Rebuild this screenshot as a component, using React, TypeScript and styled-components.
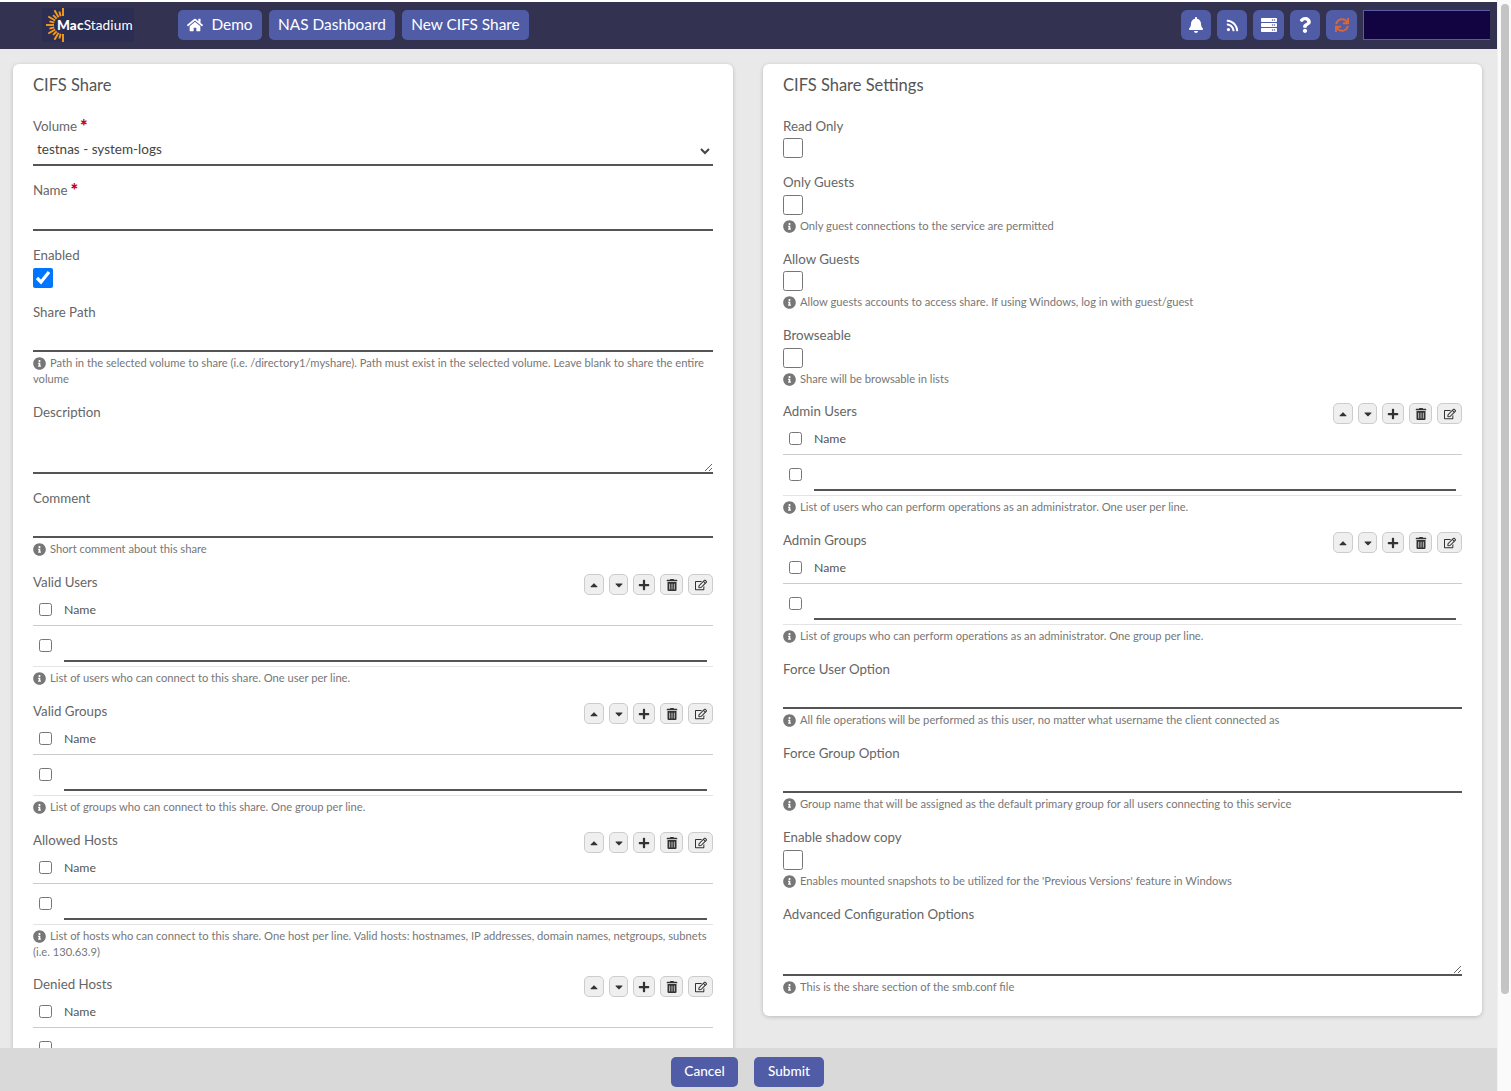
import React from 'react'
import styled, { createGlobalStyle } from 'styled-components'
import {
  FaHome,
  FaBell,
  FaRss,
  FaServer,
  FaQuestion,
  FaSync,
  FaInfoCircle,
  FaCaretUp,
  FaCaretDown,
  FaPlus,
  FaTrashAlt,
  FaRegEdit,
} from 'react-icons/fa'

const GlobalStyle = createGlobalStyle`
  html, body {
    margin: 0;
    height: 100%;
    overflow: hidden;
    font-family: Lato, "Open Sans", sans-serif;
    background: #fff;
  }
`

const Page = styled.div`
  width: 1511px;
  height: 1091px;
  display: flex;
  overflow: hidden;
`

const Main = styled.div`
  width: 1497px;
  height: 100%;
  display: flex;
  flex-direction: column;
  padding-top: 2px;
  box-sizing: border-box;
`

const ScrollTrack = styled.div`
  width: 14px;
  background: #fafafa;
  border-left: 1px solid #f0f0f0;
  box-sizing: border-box;
  padding: 4px 2px 0 3px;
`

const ScrollThumb = styled.div`
  height: 990px;
  background: #c4c4c4;
  border-radius: 4px;
`

const Navbar = styled.div`
  height: 47px;
  flex: none;
  background: #333251;
  display: flex;
  align-items: flex-start;
  padding: 8px 7px 0 42px;
  box-sizing: border-box;
`

const LogoBox = styled.div`
  width: 92px;
  height: 34px;
  margin-right: 44px;
  margin-top: -2px;
  display: flex;
  align-items: center;
  background: #2c2d52;
`

const LogoText = styled.span`
  font-size: 13.6px;
  color: #fff;
  margin-left: -11px;
  letter-spacing: 0.1px;
  padding-bottom: 1px;

  b {
    font-weight: 900;
  }
`

const NavButton = styled.div<{ $w: number }>`
  width: ${(p) => p.$w}px;
  height: 30px;
  box-sizing: border-box;
  padding-bottom: 2px;
  background: #515ca6;
  border-radius: 5px;
  color: #fff;
  font-size: 15.4px;
  display: flex;
  align-items: center;
  justify-content: center;
  gap: 8px;
  margin-right: 7px;
  flex: none;
  svg {
    font-size: 16px;
    margin-top: 2px;
  }
`

const NavSpacer = styled.div`
  flex: 1;
`

const IconButton = styled.div<{ $w?: number; $size?: number; $orange?: boolean }>`
  width: ${(p) => p.$w || 30}px;
  height: 30px;
  background: #515ca6;
  border-radius: 6px;
  color: ${(p) => (p.$orange ? '#d8663a' : '#fff')};
  display: flex;
  align-items: center;
  justify-content: center;
  margin-right: 6px;
  font-size: ${(p) => p.$size || 16}px;
  flex: none;
`

const DarkBox = styled.div`
  width: 127px;
  height: 30px;
  box-sizing: border-box;
  background: #120440;
  border-top: 1px solid #5a5aa8;
  border-bottom: 1px solid #5a5aa8;
  border-left: 1px solid #5a5aa8;
  flex: none;
`

const Content = styled.div`
  flex: 1;
  min-height: 0;
  overflow: hidden;
  background: #e9e9e9;
  display: flex;
  align-items: flex-start;
  padding: 15px 15px 0 13px;
  gap: 30px;
`

const Card = styled.div<{ $w: number }>`
  width: ${(p) => p.$w}px;
  flex: none;
  box-sizing: border-box;
  background: #fff;
  border-radius: 6px;
  padding: 11px 20px 6px;
  box-shadow: 0 1px 4px rgba(0, 0, 0, 0.2);
`

const CardTitle = styled.div`
  font-size: 16.5px;
  line-height: 20px;
  color: #555;
  margin-bottom: 21px;
`

const Field = styled.div<{ $mb?: number }>`
  margin-bottom: ${(p) => p.$mb ?? 14}px;
`

const Label = styled.div`
  font-size: 13.3px;
  line-height: 20px;
  color: #666;
  display: flex;
  gap: 3px;
`

const Required = styled.span`
  color: #c5000b;
  font-weight: 900;
  font-size: 18px;
  line-height: 16px;
  margin-top: 2px;
`

const SelectInput = styled.select`
  display: block;
  width: 100%;
  height: 30px;
  border: 0;
  border-bottom: 2px solid #555;
  background: #fff;
  font: 13.5px Lato, sans-serif;
  color: #444;
  outline: none;
  padding: 0 0 2px;
`

const TextInput = styled.input<{ $h?: number }>`
  display: block;
  width: 100%;
  height: ${(p) => p.$h || 30}px;
  box-sizing: border-box;
  border: 0;
  border-bottom: 2px solid #555;
  outline: none;
  background: #fff;
  padding: 0 4px;
`

const TextArea = styled.textarea`
  display: block;
  width: 100%;
  height: 52px;
  box-sizing: border-box;
  border: 0;
  border-bottom: 2px solid #555;
  outline: none;
  padding: 0 4px;
  resize: vertical;
`

const BigCheck = styled.input.attrs({ type: 'checkbox' })<{ $mt?: number }>`
  display: block;
  width: 20px;
  height: 20px;
  margin: ${(p) => p.$mt ?? 3}px 0 0;
`

const SmallCheck = styled.input.attrs({ type: 'checkbox' })`
  display: block;
  width: 13px;
  height: 13px;
  margin: 0;
  flex: none;
`

const Help = styled.div`
  font-size: 11.2px;
  line-height: 16px;
  color: #777;
  margin-top: 3px;
  padding-bottom: 1px;

  svg {
    color: #777;
    font-size: 13px;
    vertical-align: -2.5px;
    margin-right: 4px;
  }
`

const TableHead = styled.div`
  display: flex;
  justify-content: space-between;
  align-items: flex-start;
  height: 24px;
`

const TableTools = styled.div`
  display: flex;
  gap: 5px;
  margin-top: 2px;
`

const ToolButton = styled.div<{ $w: number }>`
  width: ${(p) => p.$w}px;
  height: 21px;
  box-sizing: border-box;
  background: #efefef;
  border: 1px solid #ccc;
  border-radius: 5px;
  color: #333;
  font-size: 12px;
  display: flex;
  align-items: center;
  justify-content: center;
`

const HeadRow = styled.div`
  height: 30px;
  display: flex;
  align-items: center;
  gap: 12px;
  padding: 0 0 2px 6px;
  border-bottom: 1px solid #ccc;
  box-sizing: border-box;
  font-size: 12.3px;
  color: #555;
`

const EditRow = styled.div`
  height: 41px;
  display: flex;
  align-items: center;
  gap: 12px;
  padding: 0 6px 2px;
  border-bottom: 1px solid #e4e4e4;
  box-sizing: border-box;
`

const RowInput = styled.input`
  flex: 1;
  min-width: 0;
  height: 36px;
  box-sizing: border-box;
  align-self: flex-start;
  border: 0;
  border-bottom: 2px solid #555;
  outline: none;
`

const Footer = styled.div`
  height: 43px;
  flex: none;
  background: #d9d9d9;
  display: flex;
  justify-content: center;
  gap: 16px;
  padding: 9px 2px 0 0;
  box-sizing: border-box;
`

const FooterButton = styled.div<{ $w: number }>`
  width: ${(p) => p.$w}px;
  height: 30px;
  box-sizing: border-box;
  padding-bottom: 2px;
  background: #515ca6;
  color: #fff;
  border-radius: 5px;
  font-size: 13.6px;
  font-weight: 500;
  display: flex;
  align-items: center;
  justify-content: center;
`

const Hint = ({ children }: { children: React.ReactNode }) => (
  <Help>
    <FaInfoCircle />
    {children}
  </Help>
)

const Logo = () => {
  const rays = [-90, -75, -60, -45, -30, -15, 0, 15, 30, 45, 60, 75, 90]
  return (
    <svg width="26" height="36" viewBox="0 0 26 36" style={{ flex: 'none' }}>
      {rays.map((a) => {
        const c = Math.cos((a * Math.PI) / 180)
        const s = Math.sin((a * Math.PI) / 180)
        const r = a % 30 === 0 ? 17 : 14
        return (
          <line
            key={a}
            x1={21 - c * 9}
            y1={18 + s * 9}
            x2={21 - c * r}
            y2={18 + s * r}
            stroke="#f59c1a"
            strokeWidth="1.9"
          />
        )
      })}
    </svg>
  )
}

const ListField = ({ label, mb, children }: { label: string; mb?: number; children?: React.ReactNode }) => (
  <Field $mb={mb}>
    <TableHead>
      <Label>{label}</Label>
      <TableTools>
        <ToolButton $w={20}><FaCaretUp /></ToolButton>
        <ToolButton $w={19}><FaCaretDown /></ToolButton>
        <ToolButton $w={22}><FaPlus /></ToolButton>
        <ToolButton $w={23}><FaTrashAlt /></ToolButton>
        <ToolButton $w={25}><FaRegEdit /></ToolButton>
      </TableTools>
    </TableHead>
    <HeadRow>
      <SmallCheck />
      Name
    </HeadRow>
    <EditRow>
      <SmallCheck />
      <RowInput />
    </EditRow>
    {children}
  </Field>
)

const App = () => {
  return (
    <Page>
      <GlobalStyle />
      <Main>
        <Navbar>
          <LogoBox>
            <Logo />
            <LogoText>
              <b>Mac</b>Stadium
            </LogoText>
          </LogoBox>
          <NavButton $w={84}><FaHome />Demo</NavButton>
          <NavButton $w={126}>NAS Dashboard</NavButton>
          <NavButton $w={127}>New CIFS Share</NavButton>
          <NavSpacer />
          <IconButton><FaBell /></IconButton>
          <IconButton $size={13}><FaRss /></IconButton>
          <IconButton $w={31}><FaServer /></IconButton>
          <IconButton><FaQuestion /></IconButton>
          <IconButton $w={31} $size={14} $orange><FaSync /></IconButton>
          <DarkBox />
        </Navbar>
        <Content>
          <Card $w={720}>
            <CardTitle>CIFS Share</CardTitle>
            <Field>
              <Label>Volume <Required>*</Required></Label>
              <SelectInput defaultValue="system-logs">
                <option value="system-logs">testnas - system-logs</option>
              </SelectInput>
            </Field>
            <Field>
              <Label>Name <Required>*</Required></Label>
              <TextInput $h={31} />
            </Field>
            <Field>
              <Label>Enabled</Label>
              <BigCheck defaultChecked />
            </Field>
            <Field>
              <Label>Share Path</Label>
              <TextInput />
              <Hint>
                Path in the selected volume to share (i.e. /directory1/myshare). Path must exist in the selected volume. Leave blank to share the entire volume
              </Hint>
            </Field>
            <Field>
              <Label>Description</Label>
              <TextArea />
            </Field>
            <Field>
              <Label>Comment</Label>
              <TextInput />
              <Hint>Short comment about this share</Hint>
            </Field>
            <ListField label="Valid Users">
              <Hint>List of users who can connect to this share. One user per line.</Hint>
            </ListField>
            <ListField label="Valid Groups">
              <Hint>List of groups who can connect to this share. One group per line.</Hint>
            </ListField>
            <ListField label="Allowed Hosts" mb={13}>
              <Hint>
                List of hosts who can connect to this share. One host per line. Valid hosts: hostnames, IP addresses, domain names, netgroups, subnets (i.e. 130.63.9)
              </Hint>
            </ListField>
            <ListField label="Denied Hosts" />
          </Card>
          <Card $w={719}>
            <CardTitle>CIFS Share Settings</CardTitle>
            <Field>
              <Label>Read Only</Label>
              <BigCheck $mt={2} />
            </Field>
            <Field>
              <Label>Only Guests</Label>
              <BigCheck />
              <Hint>Only guest connections to the service are permitted</Hint>
            </Field>
            <Field>
              <Label>Allow Guests</Label>
              <BigCheck $mt={2} />
              <Hint>Allow guests accounts to access share. If using Windows, log in with guest/guest</Hint>
            </Field>
            <Field $mb={13}>
              <Label>Browseable</Label>
              <BigCheck />
              <Hint>Share will be browsable in lists</Hint>
            </Field>
            <ListField label="Admin Users">
              <Hint>List of users who can perform operations as an administrator. One user per line.</Hint>
            </ListField>
            <ListField label="Admin Groups">
              <Hint>List of groups who can perform operations as an administrator. One group per line.</Hint>
            </ListField>
            <Field>
              <Label>Force User Option</Label>
              <TextInput />
              <Hint>All file operations will be performed as this user, no matter what username the client connected as</Hint>
            </Field>
            <Field>
              <Label>Force Group Option</Label>
              <TextInput />
              <Hint>Group name that will be assigned as the default primary group for all users connecting to this service</Hint>
            </Field>
            <Field>
              <Label>Enable shadow copy</Label>
              <BigCheck />
              <Hint>Enables mounted snapshots to be utilized for the 'Previous Versions' feature in Windows</Hint>
            </Field>
            <Field>
              <Label>Advanced Configuration Options</Label>
              <TextArea />
              <Hint>This is the share section of the smb.conf file</Hint>
            </Field>
          </Card>
        </Content>
        <Footer>
          <FooterButton $w={67}>Cancel</FooterButton>
          <FooterButton $w={70}>Submit</FooterButton>
        </Footer>
      </Main>
      <ScrollTrack>
        <ScrollThumb />
      </ScrollTrack>
    </Page>
  )
}

export default App
